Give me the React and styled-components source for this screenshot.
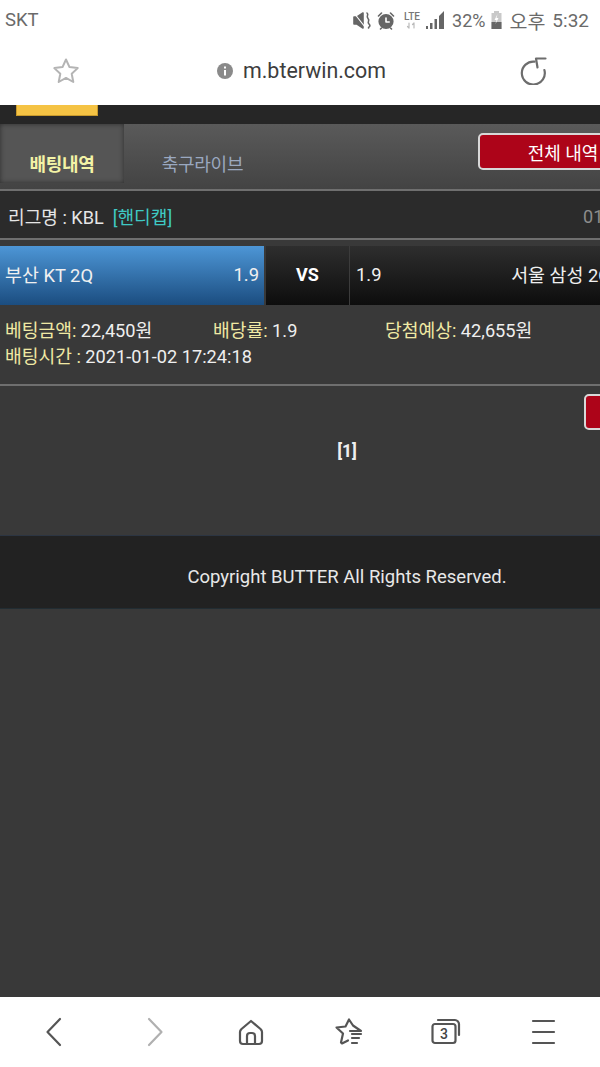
import React from 'react'
import styled, { createGlobalStyle } from 'styled-components'

const GlobalStyle = createGlobalStyle`
  html, body { margin: 0; padding: 0; background: #393939; }
  body { font-family: Roboto, "Noto Sans CJK KR", sans-serif; }
  * { box-sizing: border-box; }
`

const KR = `Roboto, "Noto Sans CJK KR", sans-serif`

const Screen = styled.div`
  width: 600px;
  height: 1067px;
  overflow: hidden;
  display: flex;
  flex-direction: column;
  background: #393939;
`

/* browser chrome */
const StatusBar = styled.div`
  height: 36px;
  background: #fff;
  display: flex;
  align-items: center;
  justify-content: space-between;
  padding: 4px 11px 0 5px;
  color: #6a6a6a;
`

const StatusRight = styled.div`
  display: flex;
  align-items: center;
`

const StatusText = styled.span`
  font-size: ${p => p.$size || 18}px;
  margin-left: ${p => p.$left || 0}px;
  white-space: nowrap;
`

const StatusIcon = styled.div`
  margin-left: ${p => p.$left || 0}px;
`

const Lte = styled.div`
  width: 18px;
  margin: 0 5px 0 8px;
  display: flex;
  flex-direction: column;
  align-items: center;
  font-size: 10px;
  line-height: 10px;
  font-weight: 500;
  color: #777;
`

const UrlBar = styled.div`
  height: 69px;
  background: #fff;
  display: flex;
  align-items: center;
  justify-content: space-between;
  padding: 0 53px 0 52px;
`

const Address = styled.div`
  display: flex;
  align-items: center;
  gap: 10px;
  font-size: 21.4px;
  color: #3d3d3d;
  margin-left: 4px;
`

/* page */
const Page = styled.div`
  flex: 1;
  min-height: 0;
  width: 694px;
  display: flex;
  flex-direction: column;
`

const TopStrip = styled.div`
  height: 19px;
  background: #262626;
  padding-left: 16px;
`

const LogoBar = styled.div`
  width: 82px;
  height: 11px;
  background: #f5c344;
  border: 1px solid #c89a2c;
  border-top: none;
`

const TabBar = styled.div`
  height: 65px;
  display: flex;
  align-items: flex-start;
  position: relative;
  background: linear-gradient(#5a5a5a, #434343);
`

const Tab = styled.div`
  width: ${p => p.$active ? 124 : 157}px;
  height: 59px;
  display: flex;
  align-items: center;
  justify-content: center;
  padding-top: 18px;
  font-family: ${KR};
  font-size: 18px;
  letter-spacing: -0.3px;
  font-weight: ${p => p.$active ? 700 : 400};
  color: ${p => p.$active ? '#f3f3a6' : '#9aa8c0'};
  background: ${p => p.$active ? '#555' : 'transparent'};
  box-shadow: ${p => p.$active ? 'inset 0 0 5px #2e2e2e' : 'none'};
`

const AllButton = styled.div`
  position: absolute;
  left: 478px;
  top: 9px;
  width: 170px;
  height: 37px;
  border-radius: 5px;
  border: 2px solid #d8d8d8;
  background: #ad0419;
  color: #fff;
  font-family: ${KR};
  font-size: 18px;
  display: flex;
  align-items: center;
  justify-content: center;
`

const Divider = styled.div`
  height: 2px;
  background: #6f6f6f;
`

const LeagueRow = styled.div`
  height: 47px;
  background: #2b2b2b;
  padding: 3px 8px 0;
  display: flex;
  align-items: center;
  font-size: 18.1px;
  color: #e6e6e6;
  white-space: nowrap;
`

const LeagueType = styled.span`
  color: #3fc9c4;
  margin-left: 9px;
`

const LeagueDate = styled.span`
  color: #8d8d8d;
  margin-left: auto;
  width: 103px;
`

const MatchRow = styled.div`
  width: 616px;
  height: 59px;
  margin-top: 6px;
  display: flex;
  color: #f0f0f0;
  font-size: 18.4px;
  white-space: nowrap;
`

const Team = styled.div`
  width: ${p => p.$w}px;
  display: flex;
  align-items: center;
  justify-content: space-between;
  padding: 0 5px 3px ${p => p.$pad}px;
  background: ${p => p.$home
    ? 'linear-gradient(#4d96d6, #1b4d80)'
    : 'linear-gradient(#2e2e2e, #0d0d0d)'};
`

const Versus = styled.div`
  width: 84px;
  margin-left: 2px;
  padding-bottom: 2px;
  display: flex;
  align-items: center;
  justify-content: center;
  font-weight: 700;
  font-size: 18px;
  color: #fff;
  border-right: 1px solid #3c3c3c;
  background: linear-gradient(#2e2e2e, #0d0d0d);
`

const Info = styled.div`
  height: 79px;
  padding: 13px 0 0 5px;
  font-size: 18.2px;
  line-height: 26px;
  color: #efefef;
  white-space: nowrap;
`

const InfoLine = styled.div`
  display: flex;
`

const InfoCell = styled.div`
  width: ${p => p.$w ? `${p.$w}px` : 'auto'};
`

const Label = styled.span`
  color: #f0e9a4;
`

const Pager = styled.div`
  height: 149px;
  position: relative;
  padding-top: 52px;
  text-align: center;
  font-size: 17.5px;
  line-height: 26px;
  font-weight: 700;
  color: #efefef;
`

const SmallButton = styled.div`
  position: absolute;
  left: 584px;
  top: 8px;
  width: 60px;
  height: 36px;
  border-radius: 5px;
  border: 2px solid #d8d8d8;
  background: #ad0419;
`

const Footer = styled.div`
  height: 74px;
  background: #222;
  border-top: 1px solid #2c3542;
  border-bottom: 1px solid #222d33;
  padding-top: 10px;
  display: flex;
  align-items: center;
  justify-content: center;
  font-size: 18.5px;
  color: #e8e8e8;
`

const BottomNav = styled.div`
  height: 70px;
  background: #fff;
  display: grid;
  grid-template-columns: repeat(6, 1fr);
  padding: 0 7px;
  justify-items: center;
`

const NavSlot = styled.div`
  padding-top: 20px;
  height: 70px;
`

const TabsIcon = styled.div`
  position: relative;
  width: 30px;
  height: 30px;
`

const TabsCount = styled.span`
  position: absolute;
  left: 1px;
  top: 7px;
  width: 23px;
  text-align: center;
  font-size: 14px;
  line-height: 20px;
  font-weight: 500;
  color: #444;
`

const Svg = ({ w, h, color = '#555', sw = 2, children }) => (
  <svg width={w} height={h} viewBox={`0 0 ${w} ${h}`} fill="none" stroke={color} strokeWidth={sw}
    strokeLinecap="round" strokeLinejoin="round" style={{ display: 'block' }}>
    {children}
  </svg>
)

const NavTabs = () => (
  <TabsIcon>
    <Svg w={30} h={30} color="#555" sw={2.2}>
      <rect x="1.500" y="7" width="23" height="19" rx="2.500" />
      <path d="M7 3h17c2 0 4 2 4 4v11" />
    </Svg>
    <TabsCount>3</TabsCount>
  </TabsIcon>
)

const App = () => (
  <Screen>
    <GlobalStyle />
    <StatusBar>
      <StatusText $size={18.5}>SKT</StatusText>
      <StatusRight>
        <Svg w={18} h={19} color="#666" sw={1.6}>
          <path d="M1 6h3l6-4v15l-6-4H1z" fill="#666" />
          <path d="M1 2l11 14" stroke="#fff" strokeWidth="1.200" />
          <path d="M14 2c2.500 2-1.500 3 1 5.500s-1.500 3 1 5.500-1 3-.5 4" />
        </Svg>
        <StatusIcon $left={6}>
          <Svg w={18} h={19} color="#666" sw={1.6}>
            <circle cx="9" cy="10.500" r="6.800" fill="#666" />
            <path d="M9 7v4h3.200" stroke="#fff" />
            <path d="M1.500 5l3-3M16.500 5l-3-3M4.500 17l-1 1M13.500 17l1 1" />
          </Svg>
        </StatusIcon>
        <Lte>LTE<Svg w={12} h={7} color="#bbb" sw={1.2}><path d="M3 1v5M1.500 4.500L3 6M8 6V1M6.500 2.500L8 1" /></Svg></Lte>
        <Svg w={18} h={18} color="#666" sw={0}>
          <path d="M0 18h2v-3H0zM4 18h2.500v-6H4zM8.500 18H11V8H8.500zM13 18h5V0l-5 5z" fill="#666" />
        </Svg>
        <StatusText $left={8}>32%</StatusText>
        <StatusIcon $left={6}>
          <Svg w={11} h={18} color="#777" sw={0}>
            <path d="M3 0h5v2h2.500v16H.5V2H3z" fill="#c9c9c9" />
            <path d="M.5 11h10v7H.5z" fill="#666" />
            <path d="M6.500 3L3.500 9h2l-1 4 3-6h-2z" fill="#fff" />
          </Svg>
        </StatusIcon>
        <StatusText $left={7} $size={19.5}>오후</StatusText>
        <StatusText $left={7} $size={19}>5:32</StatusText>
      </StatusRight>
    </StatusBar>
    <UrlBar>
      <Svg w={28} h={28} color="#b4b4b4" sw={2}>
        <path d="M14 2.500l3.500 7.600 8.200 1-6 5.700 1.600 8.200L14 20.900 6.700 25l1.600-8.200-6-5.700 8.200-1z" />
      </Svg>
      <Address>
        <Svg w={16} h={16} sw={0}>
          <circle cx="8" cy="8" r="8" fill="#8a8a8a" />
          <path d="M7 7h2v5.500H7zM7 3.500h2v2H7z" fill="#fff" />
        </Svg>
        m.bterwin.com
      </Address>
      <Svg w={28} h={28} color="#6d6d6d" sw={2.2}>
        <path d="M15.500 4.600A11.500 11.500 0 1 0 25.400 13" />
        <path d="M26.500 1.500H17l1.500 9" />
      </Svg>
    </UrlBar>
    <Page>
      <TopStrip><LogoBar /></TopStrip>
      <TabBar>
        <Tab $active>배팅내역</Tab>
        <Tab>축구라이브</Tab>
        <AllButton>전체 내역</AllButton>
      </TabBar>
      <Divider />
      <LeagueRow>
        리그명 : KBL <LeagueType>[핸디캡]</LeagueType>
        <LeagueDate>01-02 17:24</LeagueDate>
      </LeagueRow>
      <Divider />
      <MatchRow>
        <Team $home $w={264} $pad={5}><span>부산 KT 2Q</span><span>1.9</span></Team>
        <Versus>VS</Versus>
        <Team $w={266} $pad={6}><span>1.9</span><span>서울 삼성 2Q</span></Team>
      </MatchRow>
      <Info>
        <InfoLine>
          <InfoCell $w={208}><Label>베팅금액:</Label> 22,450원</InfoCell>
          <InfoCell $w={172}><Label>배당률:</Label> 1.9</InfoCell>
          <InfoCell><Label>당첨예상:</Label> 42,655원</InfoCell>
        </InfoLine>
        <InfoLine>
          <InfoCell><Label>배팅시간 :</Label> 2021-01-02 17:24:18</InfoCell>
        </InfoLine>
      </Info>
      <Divider />
      <Pager>
        [1]
        <SmallButton />
      </Pager>
      <Footer>Copyright BUTTER All Rights Reserved.</Footer>
    </Page>
    <BottomNav>
      <NavSlot>
        <Svg w={26} h={30} color="#555" sw={2.2}><path d="M17 2L4.500 15 17 28" /></Svg>
      </NavSlot>
      <NavSlot>
        <Svg w={26} h={30} color="#b0b0b0" sw={2.2}><path d="M9 2l12.500 13L9 28" /></Svg>
      </NavSlot>
      <NavSlot>
        <Svg w={28} h={30} color="#555" sw={2.2}>
          <path d="M14 4l-9.500 8c-1 1-1.500 2-1.500 3v9c0 2 1 3 3 3h16c2 0 3-1 3-3v-9c0-1-.5-2-1.500-3z" />
          <path d="M10 27v-8c0-2 1-3 3-3h2c2 0 3 1 3 3v8" />
        </Svg>
      </NavSlot>
      <NavSlot>
        <Svg w={30} h={30} color="#555" sw={2.2}>
          <path d="M16 14h11l-8-5.500L15 2.500l-3.500 7-9 1 6.500 6-2 9 1 1 6-3" />
          <path d="M18 17h9M18 21h7M18 26h5" />
        </Svg>
      </NavSlot>
      <NavSlot>
        <NavTabs />
      </NavSlot>
      <NavSlot>
        <Svg w={26} h={30} color="#555" sw={2.2}><path d="M2 4h21M2 15h21M2 26h21" /></Svg>
      </NavSlot>
    </BottomNav>
  </Screen>
)

export default App
